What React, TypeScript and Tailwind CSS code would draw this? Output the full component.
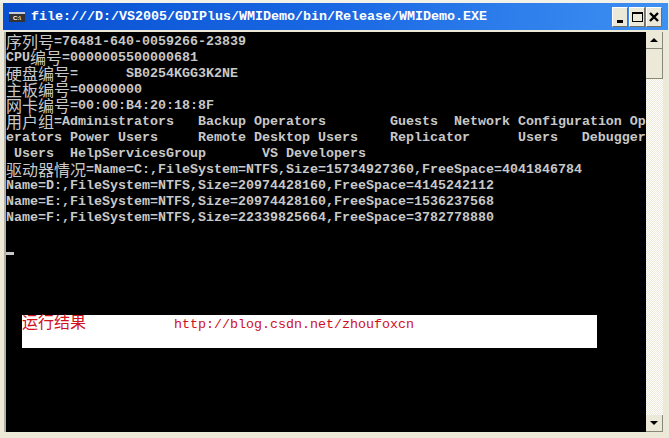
import React from 'react';

const mono = "font-['Liberation_Mono','Noto_Sans_CJK_SC',monospace]";

// one console row: 80 cells of 8px, CJK takes two cells
const Row: React.FC<{ lead?: string; zh?: string; text?: string }> = ({ lead, zh, text }) => (
  <div className="h-4 flex items-center whitespace-pre">
    {lead && <span>{lead}</span>}
    {zh && zh.split('').map((c, i) => (
      <span key={i} className="w-4 -mt-[3px] text-center text-[16px] leading-4 font-normal font-['Noto_Sans_CJK_SC',sans-serif] shrink-0">{c}</span>
    ))}
    <span>{text}</span>
  </div>
);

const CaptionButton: React.FC<{ children: React.ReactNode }> = ({ children }) => (
  <div className="w-[16px] h-[20px] bg-[#ece9d8] border border-t-white border-l-white border-r-[#716f64] border-b-[#716f64] flex items-center justify-center">
    {children}
  </div>
);

export default function App() {
  return (
    <div className="w-[669px] h-[438px] bg-[#ece9d8] flex flex-col overflow-hidden border-t-[3px] border-[#f4f2e8]">
      <div className="h-[27px] ml-[3px] mr-px shrink-0 bg-gradient-to-r from-[#0850d0] via-[#1a68e4] to-[#3f90f2] flex items-center pl-[6px] pr-[6px]">
        <div className="w-[16px] h-[10px] bg-[#333333] border-t-2 border-[#c8c8d8] flex items-center justify-center text-[6px] leading-none font-bold text-white font-['Liberation_Sans',sans-serif] shrink-0">
          C:\
        </div>
        <div className={`ml-[6px] flex-1 text-white font-bold text-[13.33px] whitespace-pre ${mono}`}>
          file:///D:/VS2005/GDIPlus/WMIDemo/bin/Release/WMIDemo.EXE
        </div>
        <div className="flex gap-px">
          <CaptionButton>
            <div className="w-[6px] h-[3px] bg-black mt-[9px] -ml-[1px]" />
          </CaptionButton>
          <CaptionButton>
            <div className="w-[11px] h-[10px] border border-black border-t-2" />
          </CaptionButton>
          <CaptionButton>
            <svg width="10" height="10" viewBox="0 0 10 10"><path d="M1 1l8 8M9 1l-8 8" stroke="#000" strokeWidth="2.4" /></svg>
          </CaptionButton>
        </div>
      </div>
      <div className="flex flex-1 min-h-0 mt-[2px] pl-[4px] pr-[6px] pb-[6px]">
        <div className="w-[2px] shrink-0 bg-[#b4b1a4]" />
        <div className={`relative flex-1 bg-black pt-[2px] text-[#c8c8c8] font-bold text-[13.33px] ${mono}`}>
          <Row zh="序列号" text="=76481-640-0059266-23839" />
          <Row lead="CPU" zh="编号" text="=0000005500000681" />
          <Row zh="硬盘编号" text="=      SB0254KGG3K2NE" />
          <Row zh="主板编号" text="=00000000" />
          <Row zh="网卡编号" text="=00:00:B4:20:18:8F" />
          <Row zh="用户组" text="=Administrators   Backup Operators        Guests  Network Configuration Op" />
          <Row text="erators Power Users     Remote Desktop Users    Replicator      Users   Debugger" />
          <Row text=" Users  HelpServicesGroup       VS Developers" />
          <Row zh="驱动器情况" text="=Name=C:,FileSystem=NTFS,Size=15734927360,FreeSpace=4041846784" />
          <Row text="Name=D:,FileSystem=NTFS,Size=20974428160,FreeSpace=4145242112" />
          <Row text="Name=E:,FileSystem=NTFS,Size=20974428160,FreeSpace=1536237568" />
          <Row text="Name=F:,FileSystem=NTFS,Size=22339825664,FreeSpace=3782778880" />
          <div className="h-4" />
          <div className="h-4 flex items-end pb-[3px]"><div className="w-2 h-[3px] bg-[#c8c8c8]" /></div>

          <div className="absolute left-[16px] top-[283px] w-[575px] h-[33px] bg-white text-[#d0101c] font-normal flex items-start whitespace-pre">
            <span className="text-[16px] leading-[13px] font-['Noto_Sans_CJK_SC',sans-serif]">运行结果</span>
            <span className="ml-[88px] leading-[19px]">http://blog.csdn.net/zhoufoxcn</span>
          </div>
        </div>
        <div className="w-[17px] flex flex-col shrink-0 bg-[repeating-conic-gradient(#ece9d8_0_25%,#ffffff_0_50%)] bg-[length:2px_2px]">
          <div className="h-[17px] bg-[#ece9d8] border-r border-b border-[#8a887c] flex items-center justify-center">
            <div className="w-0 h-0 border-x-[4px] border-x-transparent border-b-[4px] border-b-black" />
          </div>
          <div className="h-[30px] bg-[#ece9d8] border-r border-b border-[#8a887c]" />
          <div className="flex-1" />
          <div className="h-[17px] bg-[#ece9d8] border-r border-b border-[#8a887c] flex items-center justify-center">
            <div className="w-0 h-0 border-x-[4px] border-x-transparent border-t-[4px] border-t-black" />
          </div>
        </div>
      </div>
    </div>
  );
}
